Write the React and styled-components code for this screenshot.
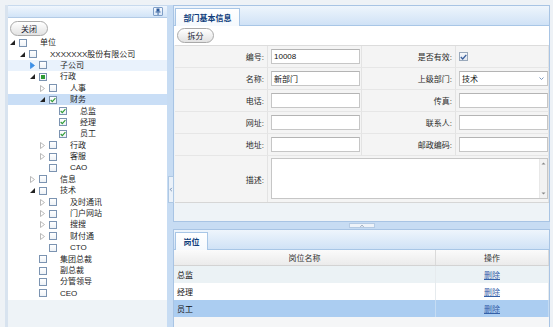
import React from 'react';
import styled, { createGlobalStyle } from 'styled-components';

const Global = createGlobalStyle`
  html, body { margin: 0; padding: 0; }
  body {
    font-family: "Liberation Sans", "Noto Sans CJK SC", sans-serif;
    font-size: 8px;
    color: #222;
    background: #eef2f6;
  }
  * { box-sizing: border-box; }
`;

const Page = styled.div`
  width: 553px;
  height: 327px;
  display: flex;
  padding: 5px 3px 0 5px;
  background: #eef2f6;
  overflow: hidden;
`;

/* ---------- left panel ---------- */
const LeftPanel = styled.div`
  width: 162px;
  display: flex;
  flex-direction: column;
  border-left: 3px solid #d8e3ef;
  background: #eef3f7;
`;

const LeftHeader = styled.div`
  height: 13px;
  display: flex;
  align-items: center;
  justify-content: flex-end;
  padding-right: 4px;
  background: linear-gradient(#f0f6fd, #d2e4f7);
  border-top: 1px solid #c8daee;
  border-bottom: 1px solid #b3cbe6;
`;

const PinBox = styled.div`
  width: 10px;
  height: 9px;
  border: 1px solid #7f9fc8;
  border-radius: 1px;
  background: linear-gradient(#f4f8fd, #d9e7f7);
  display: flex;
  align-items: center;
  justify-content: center;
`;

const TreeArea = styled.div`
  height: 282px;
  background: #fff;
  padding-top: 3px;
`;

const PillButton = styled.div`
  width: ${p => p.$w}px;
  height: 15px;
  margin-left: ${p => p.$ml || 0}px;
  border: 1px solid #a9a9a9;
  border-radius: 8px;
  background: linear-gradient(#ffffff, #e2e2e2);
  display: flex;
  align-items: center;
  justify-content: center;
  color: #223;
  font-size: 8px;
`;

const Tree = styled.div`
  margin-top: 1px;
`;

const Row = styled.div`
  height: 11.4px;
  display: flex;
  align-items: center;
  padding-left: ${p => p.$level * 10}px;
  background: ${p => (p.$selected ? '#c9def6' : p.$hover ? '#e9f2fc' : 'transparent')};
`;

const ArrowSlot = styled.div`
  width: 9px;
  height: 9px;
  display: flex;
  align-items: center;
  justify-content: center;
`;

const Check = styled.div`
  width: 8px;
  height: 8px;
  margin-left: 2px;
  border: 1px solid #7b93b1;
  background: linear-gradient(#ffffff, #eef2f6);
  display: flex;
  align-items: center;
  justify-content: center;
`;

const Partial = styled.div`
  width: 4px;
  height: 4px;
  background: #2e9b35;
`;

const NodeText = styled.span`
  margin-left: 13px;
  white-space: nowrap;
  line-height: 11px;
  color: #1d1d1d;
`;

/* ---------- splitters ---------- */
const VSplit = styled.div`
  width: 6px;
  background: #c7dcf3;
  position: relative;
`;

const VHandle = styled.div`
  position: absolute;
  left: 1px;
  top: 171px;
  width: 6px;
  height: 27px;
  background: #eaf1f9;
  border: 1px solid #aec8e4;
  display: flex;
  align-items: center;
  justify-content: center;
  z-index: 2;
`;

const HSplit = styled.div`
  height: 7px;
  background: #c7dcf3;
  display: flex;
  justify-content: center;
`;

const HHandle = styled.div`
  width: 26px;
  height: 5px;
  margin-top: 1px;
  background: #eef3f9;
  border: 1px solid #b5cbe4;
  display: flex;
  align-items: center;
  justify-content: center;
`;

/* ---------- right column ---------- */
const RightCol = styled.div`
  flex: 1;
  display: flex;
  flex-direction: column;
`;

const Panel = styled.div`
  display: flex;
  flex-direction: column;
  border: 1px solid #a8c4e4;
  border-bottom: ${p => (p.$open ? 'none' : '1px solid #a8c4e4')};
  height: ${p => p.$h}px;
  background: #eef3f7;
  overflow: hidden;
`;

const TabBar = styled.div`
  height: 20px;
  flex: none;
  display: flex;
  align-items: flex-end;
  padding-left: 1px;
  background: linear-gradient(#eef5fc, #d0e2f6);
  border-bottom: 1px solid #a8c6e6;
`;

const Tab = styled.div`
  width: ${p => p.$w}px;
  height: 18px;
  margin-bottom: -1px;
  border: 1px solid #a8c6e6;
  border-bottom: none;
  background: linear-gradient(#ffffff, #f5f9fd);
  display: flex;
  align-items: center;
  justify-content: center;
  color: #0f3e7c;
  font-weight: bold;
  font-size: 8px;
`;

const Toolbar = styled.div`
  height: 19px;
  flex: none;
  display: flex;
  align-items: center;
  padding-left: 3px;
  background: #fff;
`;

const ToolSep = styled.div`
  width: 1px;
  height: 14px;
  margin-left: 5px;
  background: #d2d2d2;
  border-right: 1px solid #fff;
`;

const Form = styled.div`
  margin-left: 1px;
  width: 374px;
  display: grid;
  grid-template-columns: 93px 94px 94px 93px;
  grid-template-rows: 22px 22px 22px 22px 22px 46px;
  background: #f4f4f4;
  border-top: 1px solid #dcdcdc;
  border-bottom: 1px solid #d6d6d6;
  flex: none;
`;

const Label = styled.div`
  display: flex;
  align-items: center;
  justify-content: flex-end;
  padding-right: 3px;
  border-right: 1px solid #e3e3e3;
  border-bottom: ${p => (p.$last ? 'none' : '1px solid #e6e6e6')};
  color: #2a2a2a;
`;

const Cell = styled.div`
  display: flex;
  align-items: ${p => (p.$top ? 'flex-start' : 'center')};
  padding: ${p => (p.$top ? '2px 0 0 3px' : '0 0 0 3px')};
  border-right: 1px solid #e3e3e3;
  border-bottom: ${p => (p.$last ? 'none' : '1px solid #e6e6e6')};
  grid-column: ${p => p.$span || 'auto'};
`;

const Input = styled.div`
  width: ${p => p.$w || 89}px;
  height: 15px;
  border: 1px solid #c6c6c6;
  border-top-color: #b4b4b4;
  background: #fff;
  display: flex;
  align-items: center;
  padding-left: 2px;
  color: #111;
  font-size: 8px;
`;

const SelectBox = styled(Input)`
  justify-content: space-between;
  padding-right: 3px;
`;

const CheckBoxSmall = styled.div`
  width: 9px;
  height: 9px;
  border: 1px solid #9aa9bb;
  background: linear-gradient(#f6f8fb, #e3e8ef);
  display: flex;
  align-items: center;
  justify-content: center;
`;

const TextArea = styled.div`
  width: 277px;
  height: 41px;
  border: 1px solid #c6c6c6;
  background: #fff;
  display: flex;
  justify-content: flex-end;
`;

const ScrollBar = styled.div`
  width: 8px;
  height: 100%;
  background: #f2f2f2;
  border-left: 1px solid #e8e8e8;
  display: flex;
  flex-direction: column;
  justify-content: space-between;
  align-items: center;
  padding: 3px 0;
`;

const Filler = styled.div`
  flex: 1;
  background: #eef3f7;
`;

/* ---------- grid ---------- */
const GridHead = styled.div`
  height: 16px;
  flex: none;
  display: grid;
  grid-template-columns: 262px 1fr;
  background: linear-gradient(#fbfbfb, #ebebeb);
  border-bottom: 1px solid #d3d3d3;
`;

const HeadCell = styled.div`
  display: flex;
  align-items: center;
  justify-content: center;
  border-right: 1px solid #dadada;
  color: #333;
`;

const GridRow = styled.div`
  height: 17px;
  flex: none;
  display: grid;
  grid-template-columns: 262px 1fr;
  background: ${p => (p.$selected ? '#abcdf1' : p.$alt ? '#ebf2f5' : '#ffffff')};
`;

const GridCell = styled.div`
  display: flex;
  align-items: center;
  justify-content: ${p => (p.$center ? 'center' : 'flex-start')};
  padding-left: ${p => (p.$center ? 0 : 3)}px;
  border-right: 1px solid ${p => (p.$selected ? '#c5dcf3' : '#e6ebee')};
  color: #111;
`;

const Link = styled.span`
  color: #3460a8;
  text-decoration: underline;
`;

const GridRest = styled.div`
  flex: 1;
  background: #f5f6f7;
`;

/* ---------- icons ---------- */
const ArrowOpen = () => (
  <svg width="5" height="5" viewBox="0 0 5 5">
    <path d="M5 0 L5 5 L0 5 Z" fill="#222" />
  </svg>
);

const ArrowClosed = ({ color }) => (
  <svg width="5" height="7" viewBox="0 0 5 7">
    <path d="M0.5 0.5 L4.5 3.5 L0.5 6.5 Z" fill={color === 'blue' ? '#3a8ee6' : '#fff'} stroke={color === 'blue' ? '#3a8ee6' : '#a8a8a8'} strokeWidth="0.8" />
  </svg>
);

const Tick = ({ color = '#2e9b35' }) => (
  <svg width="7" height="6" viewBox="0 0 7 6">
    <path d="M0.8 3 L2.7 5 L6.3 0.8" fill="none" stroke={color} strokeWidth="1.3" />
  </svg>
);

const Pin = () => (
  <svg width="6" height="7" viewBox="0 0 6 7">
    <rect x="1.5" y="0.5" width="3" height="3" fill="#2c5a9a" />
    <rect x="0.5" y="3.5" width="5" height="1" fill="#2c5a9a" />
    <rect x="2.6" y="4.5" width="0.9" height="2.5" fill="#2c5a9a" />
  </svg>
);

const Chevron = ({ dir = 'down', color = '#6d8bb4', size = 5 }) => {
  const d = {
    down: 'M0.5 1.5 L2.5 3.5 L4.5 1.5',
    up: 'M0.5 3.5 L2.5 1.5 L4.5 3.5',
    left: 'M3.5 0.5 L1.5 2.5 L3.5 4.5',
  }[dir];
  return (
    <svg width={size} height={size} viewBox="0 0 5 5">
      <path d={d} fill="none" stroke={color} strokeWidth="0.9" />
    </svg>
  );
};

const TriSmall = ({ dir }) => (
  <svg width="5" height="3" viewBox="0 0 5 3">
    <path d={dir === 'up' ? 'M0.5 2.5 L2.5 0.5 L4.5 2.5 Z' : 'M0.5 0.5 L2.5 2.5 L4.5 0.5 Z'} fill="#888" />
  </svg>
);

/* ---------- data ---------- */
const nodes = [
  { l: 0, t: '单位', a: 'open' },
  { l: 1, t: 'XXXXXXX股份有限公司', a: 'open' },
  { l: 2, t: '子公司', a: 'hover', hover: true },
  { l: 2, t: '行政', a: 'open', c: 'partial' },
  { l: 3, t: '人事', a: 'closed' },
  { l: 3, t: '财务', a: 'open', c: 'checked', selected: true },
  { l: 4, t: '总监', c: 'checked' },
  { l: 4, t: '经理', c: 'checked' },
  { l: 4, t: '员工', c: 'checked' },
  { l: 3, t: '行政', a: 'closed' },
  { l: 3, t: '客服', a: 'closed' },
  { l: 3, t: 'CAO' },
  { l: 2, t: '信息', a: 'closed' },
  { l: 2, t: '技术', a: 'open' },
  { l: 3, t: '及时通讯', a: 'closed' },
  { l: 3, t: '门户网站', a: 'closed' },
  { l: 3, t: '搜搜', a: 'closed' },
  { l: 3, t: '财付通', a: 'closed' },
  { l: 3, t: 'CTO' },
  { l: 2, t: '集团总裁' },
  { l: 2, t: '副总裁' },
  { l: 2, t: '分管领导' },
  { l: 2, t: 'CEO' },
];

const posts = [
  { name: '总监', alt: true },
  { name: '经理' },
  { name: '员工', selected: true },
];

export default function App() {
  return (
    <>
      <Global />
      <Page>
        <LeftPanel>
          <LeftHeader>
            <PinBox><Pin /></PinBox>
          </LeftHeader>
          <TreeArea>
            <PillButton $w={38} $ml={2}>关闭</PillButton>
            <Tree>
              {nodes.map((n, i) => (
                <Row key={i} $level={n.l} $selected={n.selected} $hover={n.hover}>
                  <ArrowSlot>
                    {n.a === 'open' && <ArrowOpen />}
                    {n.a === 'closed' && <ArrowClosed />}
                    {n.a === 'hover' && <ArrowClosed color="blue" />}
                  </ArrowSlot>
                  <Check>
                    {n.c === 'checked' && <Tick />}
                    {n.c === 'partial' && <Partial />}
                  </Check>
                  <NodeText>{n.t}</NodeText>
                </Row>
              ))}
            </Tree>
          </TreeArea>
        </LeftPanel>

        <VSplit>
          <VHandle><Chevron dir="left" color="#4a6a96" size={5} /></VHandle>
        </VSplit>

        <RightCol>
          <Panel $h={217}>
            <TabBar><Tab $w={65}>部门基本信息</Tab></TabBar>
            <Toolbar>
              <PillButton $w={37}>拆分</PillButton>
              <ToolSep />
            </Toolbar>
            <Form>
              <Label>编号:</Label>
              <Cell><Input>10008</Input></Cell>
              <Label>是否有效:</Label>
              <Cell><CheckBoxSmall><Tick color="#3a5f9c" /></CheckBoxSmall></Cell>

              <Label>名称:</Label>
              <Cell><Input>新部门</Input></Cell>
              <Label>上级部门:</Label>
              <Cell><SelectBox>技术<Chevron dir="down" /></SelectBox></Cell>

              <Label>电话:</Label>
              <Cell><Input /></Cell>
              <Label>传真:</Label>
              <Cell><Input /></Cell>

              <Label>网址:</Label>
              <Cell><Input /></Cell>
              <Label>联系人:</Label>
              <Cell><Input /></Cell>

              <Label>地址:</Label>
              <Cell><Input /></Cell>
              <Label>邮政编码:</Label>
              <Cell><Input /></Cell>

              <Label $last>描述:</Label>
              <Cell $span="2 / 5" $top $last>
                <TextArea>
                  <ScrollBar><TriSmall dir="up" /><TriSmall dir="down" /></ScrollBar>
                </TextArea>
              </Cell>
            </Form>
            <Filler />
          </Panel>

          <HSplit>
            <HHandle><Chevron dir="up" color="#6a7f9c" size={4} /></HHandle>
          </HSplit>

          <Panel $h={98} $open>
            <TabBar><Tab $w={33}>岗位</Tab></TabBar>
            <GridHead>
              <HeadCell>岗位名称</HeadCell>
              <HeadCell>操作</HeadCell>
            </GridHead>
            {posts.map((p, i) => (
              <GridRow key={i} $alt={p.alt} $selected={p.selected}>
                <GridCell $selected={p.selected}>{p.name}</GridCell>
                <GridCell $center $selected={p.selected}><Link>删除</Link></GridCell>
              </GridRow>
            ))}
            <GridRest />
          </Panel>
        </RightCol>
      </Page>
    </>
  );
}
